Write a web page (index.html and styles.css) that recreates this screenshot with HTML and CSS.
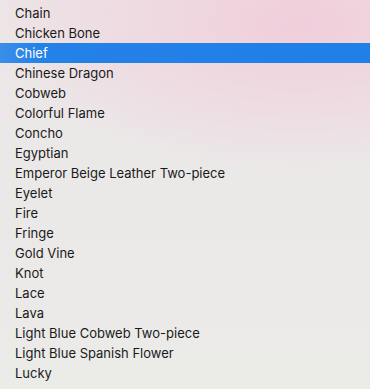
FILE: index.html
```html
<!DOCTYPE html>
<html>
<head>
<meta charset="utf-8">
<link rel="stylesheet" href="styles.css">
</head>
<body>
<ul class="menu">
  <li class="item">Chain</li>
  <li class="item">Chicken Bone</li>
  <li class="item selected">Chief</li>
  <li class="item">Chinese Dragon</li>
  <li class="item">Cobweb</li>
  <li class="item">Colorful Flame</li>
  <li class="item">Concho</li>
  <li class="item">Egyptian</li>
  <li class="item">Emperor Beige Leather Two-piece</li>
  <li class="item">Eyelet</li>
  <li class="item">Fire</li>
  <li class="item">Fringe</li>
  <li class="item">Gold Vine</li>
  <li class="item">Knot</li>
  <li class="item">Lace</li>
  <li class="item">Lava</li>
  <li class="item">Light Blue Cobweb Two-piece</li>
  <li class="item">Light Blue Spanish Flower</li>
  <li class="item">Lucky</li>
</ul>
</body>
</html>
```
FILE: styles.css
```css
html, body {
  margin: 0;
  padding: 0;
  width: 370px;
  height: 389px;
  overflow: hidden;
}
body {
  background:
    radial-gradient(ellipse 300px 150px at 300px 25px, rgba(240, 205, 218, 0.95), rgba(240, 205, 218, 0) 100%),
    linear-gradient(180deg, #ede4e6 0%, #ebe8e8 35%, #ebebe8 100%);
  font-family: Inter, "Liberation Sans", Arial, sans-serif;
  font-size: 13px;
  color: #1a1a1a;
}
.menu {
  list-style: none;
  margin: 0;
  padding: 3px 0 0 0;
}
.item {
  height: 20px;
  line-height: 20px;
  padding-left: 15px;
  white-space: nowrap;
}
.selected {
  background: linear-gradient(90deg, #3a8eea 0px, #2481e8 40px, #2080e8 100%);
  color: #ffffff;
}
```
